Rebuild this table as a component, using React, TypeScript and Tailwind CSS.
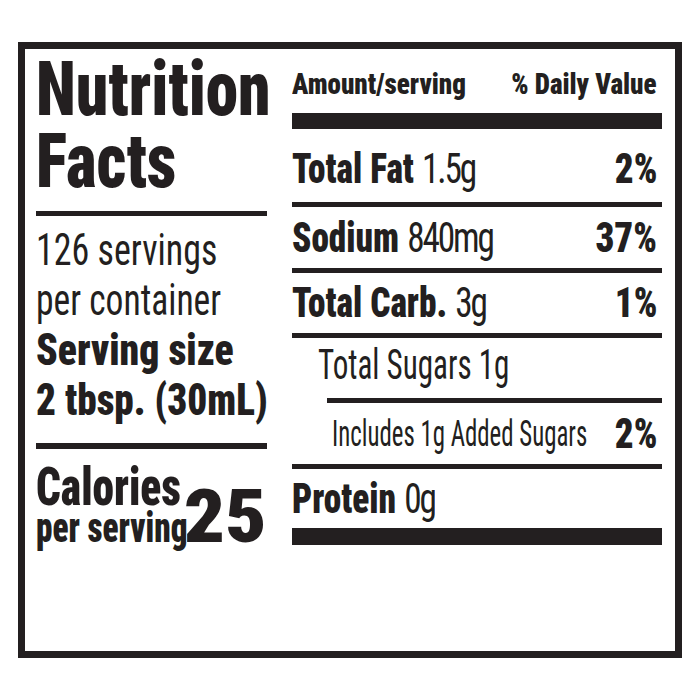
function Rule({ className }: { className: string }) {
  return <div className={`bg-[#231f20] ${className}`} />;
}

function Row({
  label,
  value,
  dv,
  className,
}: {
  label: string;
  value: string;
  dv?: string;
  className: string;
}) {
  return (
    <div className={`flex items-center justify-between pr-[5px] ${className}`}>
      <div className="min-w-0 flex-1 origin-left scale-x-[0.84] text-[42px] leading-none whitespace-nowrap">
        <span className="font-black">{label}</span>{" "}
        <span className="font-normal tracking-[-0.06em]">{value}</span>
      </div>
      {dv && (
        <div className="shrink-0 origin-right scale-x-[0.88] text-[42px] leading-none font-black">
          {dv}
        </div>
      )}
    </div>
  );
}

export default function App() {
  return (
    <div className="w-[700px] h-[700px] bg-white pt-[42px] px-[18px] font-['Roboto_Condensed',sans-serif] text-[#231f20]">
      <div className="h-[616px] border-[7px] border-[#231f20] flex pl-[11px] pr-[13px]">
        {/* Left column */}
        <div className="w-[231px] flex flex-col">
          <div className="pt-[4px] text-[76px] leading-[72px] font-black whitespace-nowrap">
            <div className="origin-left scale-x-[0.86]">Nutrition</div>
            <div className="origin-left scale-x-[0.86]">Facts</div>
          </div>
          <Rule className="mt-[14px] h-[5px]" />
          <div className="mt-[9px] text-[45px] leading-[50px] whitespace-nowrap">
            <div className="origin-left scale-x-[0.8] font-normal">126 servings</div>
            <div className="origin-left scale-x-[0.79] font-normal">per container</div>
            <div className="origin-left scale-x-[0.88] font-black">Serving size</div>
            <div className="origin-left scale-x-[0.87] font-black">2 tbsp. (30mL)</div>
          </div>
          <Rule className="mt-[18px] h-[6px]" />
          <div className="mt-[15px] flex items-end justify-between font-black">
            <div className="min-w-0 flex-1 flex flex-col whitespace-nowrap">
              <span className="origin-left scale-x-[0.82] text-[53px] leading-[46px]">Calories</span>
              <span className="mt-[2px] origin-left scale-x-[0.79] text-[42px] leading-[32px]">
                per serving
              </span>
            </div>
            <span className="shrink-0 origin-right scale-x-[1.08] text-[75px] leading-[56px]">25</span>
          </div>
        </div>

        {/* Right column */}
        <div className="ml-[25px] w-[370px] flex flex-col">
          <div className="h-[64px] pt-[6px] flex items-center justify-between pr-[5px] text-[30px] leading-none font-black whitespace-nowrap">
            <span className="min-w-0 origin-left scale-x-[0.9]">Amount/serving</span>
            <span className="shrink-0 origin-right scale-x-[0.9]">% Daily Value</span>
          </div>
          <Rule className="h-[16px]" />
          <Row label="Total Fat" value="1.5g" dv="2%" className="h-[73px] pt-[6px]" />
          <Rule className="h-[5px]" />
          <Row label="Sodium" value="840mg" dv="37%" className="h-[61px]" />
          <Rule className="h-[5px]" />
          <Row label="Total Carb." value="3g" dv="1%" className="h-[60px]" />
          <Rule className="h-[5px]" />
          <div className="h-[60px] pb-[6px] pl-[26px] flex items-center text-[42px] leading-none font-normal whitespace-nowrap">
            <span className="origin-left scale-x-[0.74]">Total Sugars 1g</span>
          </div>
          <Rule className="ml-[35px] h-[5px]" />
          <div className="h-[61px] pl-[40px] pr-[5px] flex items-center justify-between leading-none whitespace-nowrap">
            <span className="min-w-0 flex-1 origin-left scale-x-[0.69] text-[36px] font-normal">
              Includes 1g Added Sugars
            </span>
            <span className="shrink-0 origin-right scale-x-[0.88] text-[42px] font-black">2%</span>
          </div>
          <Rule className="h-[5px]" />
          <Row label="Protein" value="0g" className="h-[59px]" />
          <Rule className="h-[17px]" />
        </div>
      </div>
    </div>
  );
}
